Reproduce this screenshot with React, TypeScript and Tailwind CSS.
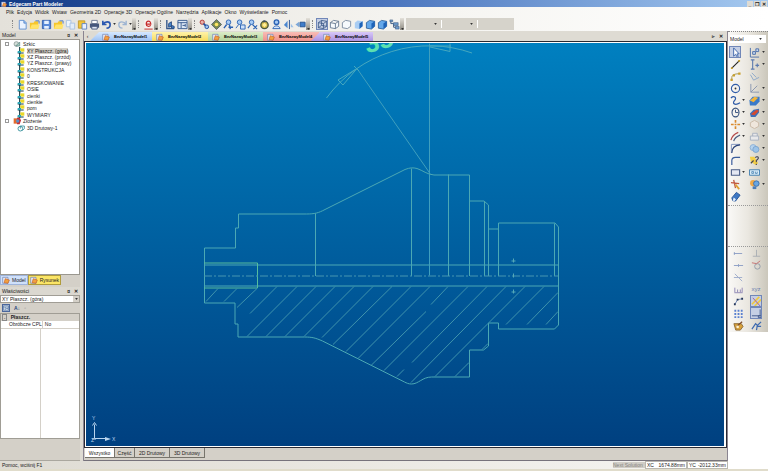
import React from 'react';
import clsx from 'clsx';

const icons: Record<string, React.ReactNode> = {
  file: <><path d="M2.5 1.5h5l2.500 2.500v7h-7.500z" fill="#eaf3ff" stroke="#5f8fd0" /><path d="M7.500 1.500v3h2.500" fill="#8fb8ee" stroke="#5f8fd0" /></>,
  open: <><path d="M1 4h4l1-1.500h4v8H1z" fill="#f6c62c" /><path d="M1 10.500 3 6h8.500l-1.500 4.500z" fill="#ffe36a" /><path d="M7 2h4v3" stroke="#4a78c8" /></>,
  save: <><path d="M1.500 1.500h9v9h-9z" fill="#5b8ad8" stroke="#335fae" /><path d="M3.500 2h5v3.500h-5zM3.500 7.500h5v3h-5z" fill="#e6f0ff" /></>,
  copy: <><path d="M1.500 1.500h5v7h-5z" fill="#eef4fb" stroke="#a9c2e2" /><path d="M5.500 4.500h5v6.500h-5z" fill="#e2ecf8" stroke="#a9c2e2" /></>,
  paste: <><path d="M1.500 2h7v8h-7z" fill="#f2c438" stroke="#c39a2a" /><path d="M5.500 5h5v6h-5z" fill="#e9f1ff" stroke="#5f84c0" /></>,
  print: <><path d="M3 1.500h6V5H3z" fill="#fff" stroke="#6c7890" /><path d="M1 5h10v4.500H1z" fill="#47587c" /><path d="M3 8h6v3H3z" fill="#dfe6f2" stroke="#47587c" /></>,
  undo: <path d="M2 2v4h4M2.500 5.500C4 2.500 10 2 10 6c0 2.500-1.500 4-4 4" stroke="#2c58b0" strokeWidth="1.800" />,
  redo: <path d="M10 2v4H6M9.500 5.500C8 2.500 2 2 2 6c0 2.500 1.500 4 4 4" stroke="#9db4d2" strokeWidth="1.500" />,
  edge: <><path d="M1.500 1h9v9.500h-9z" fill="#f7f0ee" /><path d="M3.500 5.500h5C8.500 1 3.500 1.500 3.500 5.500c0 3 3.500 3 5 1.500" stroke="#c62a2a" strokeWidth="1.300" /><path d="M1.500 11h9" stroke="#c62a2a" /></>,
  layers: <><path d="M2 1v9.500h8" stroke="#35588c" strokeWidth="1.500" /><path d="M4 5l3-2v5l-3 1zM7 7l3 1v2H7z" fill="#4a88d0" stroke="#27497e" /></>,
  panel: <><path d="M1 1.500h10v9H1z" fill="#dce8f5" stroke="#35588c" /><path d="M1 4h10M4.500 4v6M6 7h3M9 5.500v3" stroke="#35588c" /></>,
  zoomAll: <><circle cx="3.500" cy="3.500" r="2.300" fill="#e9b0a8" stroke="#b03434" /><path d="m5 5 3 3" stroke="#234d9c" strokeWidth="2" /><circle cx="8.500" cy="8.500" r="2" fill="#9ec4f5" stroke="#234d9c" /></>,
  pan: <><path d="m6 .5 5.500 5.500L6 11.500.5 6z" fill="#7c8b4e" stroke="#536070" /><circle cx="6" cy="6" r="2" fill="#ffe765" /></>,
  zoomIn: <><circle cx="6" cy="3.500" r="2.500" fill="#a8ccf5" stroke="#2b62b4" /><path d="m4 6-3 4M7 6l1 5M6 9h5" stroke="#2b62b4" strokeWidth="1.500" /></>,
  zoomBox: <><circle cx="5" cy="3.500" r="2.500" fill="#a8ccf5" stroke="#2b62b4" /><path d="m4 6-3 4M6 6.500h5V11H6z" fill="#cfe2fa" stroke="#2b62b4" /></>,
  zoomOut: <><circle cx="5" cy="3.500" r="2.500" fill="#a8ccf5" stroke="#2b62b4" /><path d="m4 6-3 4M6 6l5 5M11 7l-4 4" stroke="#2b62b4" strokeWidth="1.300" /></>,
  rotate: <><circle cx="6" cy="6.500" r="4" fill="#d8bc4a" stroke="#4a5a40" strokeWidth="1.500" /><path d="M3.500 6.500 6 4l2.500 2.500L6 9z" fill="#fff09a" /><path d="m5 1 3 1.500L5 4" fill="#3d4c66" /></>,
  view: <><circle cx="6" cy="3.500" r="2.500" fill="#a8ccf5" stroke="#2b62b4" strokeWidth="1.500" /><path d="M2 10.500c1-4 7-4 8 0z" fill="#d5e5f9" stroke="#2b62b4" /></>,
  mirror: <><path d="M5 2v8L1 6.500z" fill="#4c87cf" /><path d="M7 1v10" stroke="#234d8c" /><path d="m8.500 5 3 4h-3z" fill="#9dc0e6" /></>,
  hide: <><path d="M4.500 3v6L.5 6z" fill="#7ea8d8" /><path d="M5.500 3.500h5.500v5H5.500z" fill="#3f7dca" stroke="#27548f" /></>,
  wire: <path d="M1.500 4 5 1.500l5.500 1V8L7 10.500l-5.500-1zM1.500 4l5.500 1 3.500-2.500M7 5v5.500M5 1.500V7l5.500 1M1.500 9.500 5 7" stroke="#2d4d7e" strokeWidth=".8" />,
  cube: <path d="M1.500 4 5 1.500l5.500 1V8L7 10.500l-5.500-1zM1.500 4l5.500 1 3.500-2.500M7 5v5.500" stroke="#5a6e88" strokeWidth=".9" fill="#f6fafd" />,
  hidden: <path d="M1.500 4 5 1.500l5.500 1V8L7 10.500l-5.500-1z" stroke="#6d7f96" strokeWidth=".9" fill="#f6fafd" />,
  shade: <><path d="M2 4 5 1.500l5.500 1V8L7 11l-5-1z" fill="#a9cdf3" /><path d="M7 5l3.500-2.500V8L7 11z" fill="#1e63b8" /></>,
  solid: <><path d="M1.500 4 5 1.500l5.500 1V8L7 11l-5.500-1z" fill="#63a7ea" stroke="#19508f" strokeWidth=".8" /><path d="M7 5l3.500-2.500V8L7 11z" fill="#1e63b8" /></>,
  tree: <><path d="M2 2v3h3M5 5v4h3" stroke="#36557f" /><path d="M1 1h3v2H1zM5 4h5v3H5zM7 8h4v3H7z" fill="#6f9ccb" stroke="#36557f" strokeWidth=".6" /></>,
  select: <path d="M4 1v9l2-2 2 3 1-.7L7.500 7.500H10z" fill="#fff" stroke="#3a62aa" />,
  line: <><path d="m2 10 8-8" stroke="#222" strokeWidth="1.200" /><path d="M1 9h2v2H1zM9 1h2v2H9z" fill="#c9a02c" /></>,
  polyline: <><path d="M2 10V7c0-3 4-4 8-4" stroke="#9a8c45" /><path d="M.5 8.500H3V11H.5zM3 3.500h2.500V6H3zM9 1.500h2.500V4H9z" fill="#c9a02c" /></>,
  circle: <><circle cx="6" cy="6" r="4.500" stroke="#2f5ba8" strokeWidth="1.200" /><circle cx="6" cy="6" r="1" fill="#333" /></>,
  spline: <path d="M1 3.500C4-.5 8 3 5 6s0 6 6 2.500" stroke="#2f5ba8" strokeWidth="1.300" />,
  ellipse: <><ellipse cx="6" cy="6" rx="3.800" ry="4.800" stroke="#37507c" strokeWidth="1.200" /><path d="M6 3v3h3" stroke="#37507c" /></>,
  point: <path d="M6 1v3M6 8v3M1 6h3M8 6h3M5 6h2" stroke="#d98a2c" strokeWidth="1.800" />,
  offset: <><path d="M1 10C2 6 5 3 9 1.500" stroke="#b44a4a" strokeWidth="1.300" /><path d="M4 11c1-3 3-5 7-6.500" stroke="#4b5d80" strokeWidth="1.300" /></>,
  fillet: <><path d="M1.500 11V1.500H11" stroke="#7d92bc" /><path d="M2 11c0-5 3-8.500 9-9" stroke="#2c4478" strokeWidth="1.200" /></>,
  corner: <path d="M2 11V6c0-2 1-3.500 4-3.500h5" stroke="#3b5d9c" strokeWidth="1.300" />,
  rect: <path d="M1.500 3h9v6h-9z" fill="#e4e7f2" stroke="#4a5c86" strokeWidth="1.200" />,
  trim: <><path d="m1 4 9 1M4 1l2 9" stroke="#c15a42" strokeWidth="1.400" /><path d="m6 6 4 5" stroke="#e0a030" strokeWidth="2" /></>,
  pencil: <><path d="m2 7.500 5-6 4 3-5 6.500-3-.500z" fill="#3f78c4" stroke="#245296" /><path d="m4 7 2.500 2L5 11l-2-.500z" fill="#e6f1ff" /></>,
  dims: <><path d="M1.500 1v10H11" stroke="#4c6da8" /><path d="M4 5h3v3H4zM7.500 2h3v3h-3z" stroke="#4c6da8" fill="#c8d8f0" /></>,
  height: <path d="M2 1h4M4 1v10M2 11h4M7 7h4M9 5v4" stroke="#5b7aae" strokeWidth="1.200" />,
  plane: <path d="M1.500 4 5 10l6-3M3 2l5 5" stroke="#8aa6c8" />,
  axes: <path d="M2 1v9h9M2 10l7-7" stroke="#8794ae" />,
  solidA: <><path d="M.5 6 4 2h7.500v5l-4 4.500H1z" fill="#3a7ac8" /><path d="m1 6 5-4 4 1-5 5z" fill="#f3b53a" /></>,
  solidB: <><path d="M1 7 5 3l6-1v4l-4 5H2z" fill="#3f6fb8" /><path d="m2 8 6-5 3 1-5 5z" fill="#d64b30" /></>,
  ghost: <path d="m6 1.500 4.500 2.500v4L6 10.500 1.500 8V4z" fill="#efe6dc" stroke="#c9b9a6" />,
  ghostBox: <path d="M1.500 5.500h9V10h-9zM4 5.500v-3h5v3" fill="#e8e8ea" stroke="#a6b0c0" />,
  boolean: <><circle cx="4.500" cy="5" r="3.300" fill="#b6d3ee" stroke="#8db0d5" /><circle cx="7.500" cy="7" r="3.300" fill="#9cc3e8" stroke="#7ba4cf" /></>,
  help: <><path d="M1 2h5l4 7-3 2-5-4z" fill="#f3cf48" /><path d="M7 3c1-2 4-1 3 1L8 6v2M8 9.500V11M2 9l3-3" stroke="#445" strokeWidth="1.200" /></>,
  label: <><path d="M.5 3h11v6H.5z" fill="#d9ecf8" stroke="#3e7cae" /><path d="M3 5v2h2V5zM7 5v2h2V5" stroke="#3e7cae" strokeWidth=".8" /></>,
  globe: <><circle cx="4.500" cy="4.500" r="3.300" fill="#f0a848" /><circle cx="8" cy="5" r="3" fill="#6aa6e2" stroke="#3c6ea8" /><path d="M4 8h4v3H4z" fill="#4c7db9" /></>,
  snapEnd: <path d="M1 6h9M1.500 4.500v3" stroke="#8b9cc4" />,
  snapMid: <path d="M1 6h10M6 4.500v3" stroke="#8b9cc4" />,
  snapCross: <path d="m2 2 8 8M1 6h9" stroke="#9cabca" />,
  ruler: <path d="M1.500 9.500h9M2 9V4M5 9V6M8 9V6M10 9V4" stroke="#8d84b4" />,
  perp: <path d="M6 2v7M2 9h8" stroke="#a9aeb4" />,
  tangent: <><circle cx="7" cy="7" r="3" stroke="#909aa8" /><path d="m1 3 5 1 4-3" stroke="#c7706e" /></>,
  nodes: <><path d="m2 9 3-5 5-1" stroke="#6a83b4" /><path d="M1 8h2v2H1zM4 3h2v2H4zM9 2h2v2H9z" fill="#25365a" /></>,
  grid: <path d="M1.500 2h2v2h-2zM5 2h2v2H5zM8.500 2h2v2h-2zM1.500 5.500h2v2h-2zM5 5.500h2v2H5zM8.500 5.500h2v2h-2zM1.500 9h2v2h-2zM5 9h2v2H5zM8.500 9h2v2h-2z" fill="#5a80d0" />,
  palette: <><path d="M1 4h8l2 3-3 4H3z" fill="#d8a13a" stroke="#8c6a34" /><path d="m4 9 1-3 5-4" stroke="#7a4a2a" strokeWidth="1.300" /><circle cx="5" cy="7.500" r="1.500" fill="#fff3d0" /></>,
  lineHi: <><path d="m1 9 8-8M4 11l7-7" stroke="#f0c93e" strokeWidth="1.800" /><path d="m2 2 8 9" stroke="#a95a9a" /></>,
  ortho: <path d="M1 8.500h9V1.500M8 8.500h3v2H8z" stroke="#40588a" />,
  run: <path d="m1 10 4-6 2 2 4-4M7 5l-1 6M6 7h5" stroke="#3c69b0" strokeWidth="1.300" />,
  sketch: <><circle cx="5" cy="6" r="3.500" fill="#d4dfd9" stroke="#7c8b89" /><path d="M4 9 10 3v6z" fill="#a2cabe" stroke="#5b8480" /></>,
  ucs: <><path d="M4 0v11M1 9h9" stroke="#173f4c" strokeWidth="1.800" /><path d="M5 2h6v5H5z" fill="#e9d829" /><path d="M1 6h5v3H1z" fill="#2aa6b8" /></>,
  assembly: <><path d="M1 2h6v8H1z" fill="#e26a2c" /><path d="M6 1h4l2 4-2 6H6z" fill="#c53038" /><circle cx="7" cy="6" r="2.500" fill="#5b90c8" /></>,
  coil: <><circle cx="5" cy="7" r="3.500" stroke="#2d8c98" strokeWidth="1.300" /><path d="M5 7V3h6v4l-3 3" stroke="#2d8c98" strokeWidth="1.200" /></>,
  doc: <><path d="M1 2h8v9H1z" fill="#e5e9f5" stroke="#6b80b0" /><path d="M3 10 5 4l6 2-2 5z" fill="#f0a040" stroke="#c86028" /></>,
};

function Icon({ name, className = 'size-[11px]' }: { name: string; className?: string }) {
  return (
    <svg viewBox="0 0 12 12" fill="none" className={clsx('shrink-0', className)} aria-hidden="true">
      {icons[name]}
    </svg>
  );
}

const menu = ['Plik', 'Edycja', 'Widok', 'Wstaw', 'Geometria 2D', 'Operacje 3D', 'Operacje Ogólne', 'Narzędzia', 'Aplikacje', 'Okno', 'Wyświetlanie', 'Pomoc'];

const toolbars = [
  ['file', 'open', 'save', 'open', 'copy', 'paste', 'print', 'undo+', 'redo+'],
  ['edge'],
  ['layers', 'panel'],
  ['zoomAll', 'pan', 'zoomIn', 'zoomBox', 'zoomOut', 'rotate', 'view', 'mirror', 'hide'],
  ['wire*', 'cube', 'hidden', 'shade', 'solid', 'solid', 'tree'],
];

const documents = [
  { name: 'BezNazwyModel1', tab: 'w-[62px] pl-3 bg-linear-to-b from-[#d6e8ff] to-[#9dc2f4] [clip-path:polygon(9px_0,100%_0,100%_100%,0_100%)]' },
  { name: 'BezNazwyModel2', tab: 'w-[56px] pl-1 bg-linear-to-b from-[#fff3a8] to-[#f8dc58]' },
  { name: 'BezNazwyModel3', tab: 'w-[55px] pl-1 bg-linear-to-b from-[#dcecc8] to-[#b4d49a]' },
  { name: 'BezNazwyModel4', tab: 'w-[56px] pl-1 bg-linear-to-b from-[#f8bdb6] to-[#ee918b]' },
  { name: 'BezNazwyModel5', tab: 'w-[62px] -ml-2 pl-3 bg-linear-to-b from-[#d8c8f8] to-[#ac94e2] [clip-path:polygon(9px_0,100%_0,100%_100%,0_100%)]' },
];

const tree = [
  { label: 'Szkic', icon: 'sketch', level: 0 },
  { label: 'XY Płaszcz. (góra)', icon: 'ucs', level: 1, selected: true },
  { label: 'XZ Płaszcz. (przód)', icon: 'ucs', level: 1 },
  { label: 'YZ Płaszcz. (prawy)', icon: 'ucs', level: 1 },
  { label: 'KONSTRUKCJA', icon: 'ucs', level: 1 },
  { label: '0', icon: 'ucs', level: 1 },
  { label: 'KRESKOWANIE', icon: 'ucs', level: 1 },
  { label: 'OSIE', icon: 'ucs', level: 1 },
  { label: 'cienki', icon: 'ucs', level: 1 },
  { label: 'cienkie', icon: 'ucs', level: 1 },
  { label: 'pom', icon: 'ucs', level: 1 },
  { label: 'WYMIARY', icon: 'ucs', level: 1 },
  { label: 'Złożenie', icon: 'assembly', level: 0 },
  { label: '3D Drutowy-1', icon: 'coil', level: 1 },
];

// "+" adds a drop-down arrow, "*" marks the active tool
const palette = [
  ['select*', 'dims+'], ['line', 'height+'], ['polyline', 'plane'], ['circle', 'axes+'],
  ['spline+', 'solidA+'], ['ellipse+', 'solidB+'], ['point+', 'ghost+'], ['offset+', 'ghostBox+'],
  ['fillet', 'boolean+'], ['corner', 'help+'], ['rect+', 'label'], ['trim', 'globe+'], ['pencil', ''],
];

const snaps = [
  ['snapEnd', 'perp'], ['snapMid', 'tangent'], ['snapCross', ''], ['ruler', 'xyz'],
  ['nodes', 'lineHi*'], ['grid', 'ortho*'], ['palette', 'run'],
];

function PanelHeader({ title }: { title: string }) {
  return (
    <div className="flex h-2 shrink-0 items-center justify-between bg-[#dbd8d0] px-0.5">
      <h2>{title}</h2>
      <div className="flex gap-1 font-bold">
        <button aria-label="Przypnij">¤</button>
        <button aria-label="Zamknij">✕</button>
      </div>
    </div>
  );
}

function Tool({ spec }: { spec: string }) {
  const name = spec.replace(/[+*]/, '');
  if (!name) return <span />;
  return (
    <div className="flex items-center">
      <button
        aria-label={name}
        className={clsx('flex size-3 items-center justify-center', spec.endsWith('*') && 'bg-[#c5cfe4] outline outline-[#7187b8] -outline-offset-1')}
      >
        {name === 'xyz' ? <span className="text-[6px] text-[#6a7fb0]">xyz</span> : <Icon name={name} />}
      </button>
      {spec.endsWith('+') && <Caret />}
    </div>
  );
}

function Caret() {
  return <svg viewBox="0 0 4 3" className="ml-px h-[2px] w-[3px] shrink-0"><path d="M0 0h4L2 3z" fill="#333" /></svg>;
}

function Toolbar() {
  return (
    <div className="flex h-[14px] shrink-0 items-center bg-linear-to-r from-[#e4e1da] via-[#f4f3ef] to-white pl-3">
      {toolbars.map((group, i) => (
        <div key={i} className="flex h-[13px] items-center">
          <span className="mr-px h-2 border-l border-dotted border-[#888]" />
          <div className="flex pl-0.5">
            {group.map((spec, j) => <Tool key={j} spec={spec} />)}
          </div>
          <span className="mr-0.5 flex h-3 w-1 items-end bg-linear-to-b from-[#e4e1da] to-[#8f8c84]"><Caret /></span>
        </div>
      ))}
      <div className="flex h-3 items-center bg-[#d6d3cb]">
        {['Warstwa', 'Kolor'].map(label => (
          <div key={label} className="flex h-2 w-9 items-center justify-end border-r border-white pr-1">
            <select aria-label={label} disabled className="w-full appearance-none" />
            <Caret />
          </div>
        ))}
        <span className="w-9" />
      </div>
    </div>
  );
}

function Sidebar() {
  return (
    <aside className="flex w-20 shrink-0 flex-col bg-[#d4d0c8]">
      <PanelHeader title="Model" />
      <div className="min-h-0 flex-1 border border-[#9a978f] bg-white pt-px">
        <ul className="flex h-[90px] flex-col">
          {tree.map(item => (
            <li key={item.label} className={clsx('flex min-h-0 flex-1 items-center', item.level ? 'pl-4' : 'pl-1')}>
              {!item.level && <span className="mr-1 size-1 border border-[#999]" />}
              <Icon name={item.icon} className="size-2" />
              <span className={clsx('ml-0.5 whitespace-nowrap leading-[6px]', item.selected && 'bg-[#d4d0c8]')}>{item.label}</span>
            </li>
          ))}
        </ul>
      </div>
      <div className="flex h-3 shrink-0 items-start">
        <button className="flex h-[10px] items-center gap-0.5 border border-[#9fb4da] bg-[#cfe0fa] px-px"><Icon name="doc" className="size-2" />Model</button>
        <button className="flex h-[10px] items-center gap-0.5 border border-[#b09c3c] bg-[#fbe566] px-px"><Icon name="doc" className="size-2" />Rysunek</button>
      </div>
      <PanelHeader title="Właściwości" />
      <div className="flex h-2 shrink-0 items-center border border-[#a09d95] bg-white">
        <select aria-label="Obiekt" className="h-full flex-1 appearance-none px-px leading-[6px]">
          <option>XY Płaszcz. (góra)</option>
        </select>
        <span className="flex h-full w-[6px] items-center justify-center bg-[#d4d0c8]"><Caret /></span>
      </div>
      <div className="flex h-[10px] shrink-0 items-center gap-1 pl-0.5">
        <button aria-label="Kategorie" className="flex size-2 items-center justify-center bg-[#c5cfe4] outline outline-[#4a669c] -outline-offset-1"><Icon name="panel" className="size-[6px]" /></button>
        <button aria-label="Alfabetycznie" className="flex font-bold text-[#26477c]">A↓</button>
        <span className="text-[#999]">▫</span>
      </div>
      <div className="flex h-[126px] shrink-0 flex-col border border-[#a09d95] bg-white">
        <table className="w-full border-collapse text-left">
          <tbody>
            <tr className="h-[7px] bg-[#d4d0c8]">
              <th colSpan={2} className="p-0 leading-[6px]"><span className="mr-0.5 ml-px border border-[#888] px-px text-[4px]">-</span> Płaszcz.</th>
            </tr>
            <tr className="h-[7px] border-b border-[#d4d0c8]">
              <td className="w-10 border-r border-[#d4d0c8] p-0 pl-2 leading-[6px] whitespace-nowrap">Obróbcze CPL</td>
              <td className="p-0 pl-0.5 leading-[6px]">No</td>
            </tr>
          </tbody>
        </table>
        <div className="w-10 flex-1 border-r border-[#d4d0c8]" />
      </div>
      <div className="h-[22px] shrink-0 border-b border-[#aaa79f]" />
    </aside>
  );
}

const hatch = [
  'M218 288l-12 13', 'M237 288l-13 13', 'M257 288l-20 19', 'M277 286l-27 27', 'M297 286l-50 50', 'M316 286l-50 50',
  'M335 286l-50 50', 'M354 286l-50 50', 'M373 286l-51 51', 'M392 286l-59 58', 'M411 286l-65 65', 'M430 286l-72 72',
  'M448 286l-17 18', 'M426 311l-55 54', 'M468 286l-84 84', 'M487 286l-75 76', 'M404 369l-7 7', 'M506 286l-95 96',
  'M525 286l-90 90', 'M544 286l-38 38', 'M558 292l-31 32', 'M558 311l-12 13', 'M469 362l-14 14', 'M488 343l-6 6',
];

function Drawing() {
  return (
    <svg viewBox="86 43 638 402" className="h-full w-full" fill="none" role="img" aria-label="Rysunek wałka">
      <g stroke="#4ba8b4" strokeWidth="1">
        <path d="M204.500 302.500v-55h31v-20h3v-14h68c8 0 12-1 18.500-4.500L405 169c5-2 8-2 12-1 6 2 10 6 17 6.500h35.500v26H484l4.500 4v24h10v-6H555l3.500 4v98l-4 4h-56v-6h-10v23l-5 4h-14v27h-38c-9 0-13 7-20 7-3 0-5-1-7-2l-82-41c-7-3-10-4-18-4h-66.500v-13h-3v-21z" />
        <path d="M315.500 213v62.500M411.500 168v107.500M448.500 174v101.500M469.500 200v75.500M484.500 201v74.500M488.500 228v47.500M498.500 228v47.500M554.500 223v52.500" />
        <path d="M204 264.500h354M204 285.500h354" />
        <path d="M429.500 43v232M357 68l73 105" stroke="#3f9fbe" />
        <path d="M326.500 97.500A128 128 0 0 1 472 52.500M357 68l-19 11.500 5 5zM430 45.500h21M430 46.500l20 4.500V43M354 65.500l5 5" stroke="#46a8bf" />
      </g>
      <path d="M204 262.500h53.500v25H204" stroke="#56bd9e" />
      <path d="M204 275.500h354" stroke="#4796b0" strokeDasharray="8 2 2 2" />
      <path d="M513.500 258v4M511.500 260.500h4M513.500 273v4M513.500 289v4M511.500 291.500h4" stroke="#55a9b8" />
      <path d={hatch.join('')} stroke="#3f93ac" strokeWidth="1" />
      <text x="367" y="53" transform="rotate(-16 367 53)" fill="#5be0b0" className="text-[26px] font-bold">35°</text>
      <path d="M94.500 424v14h12M92.500 425l2-3 2 3M92 438.500h4" stroke="#b8d4ee" />
      <path d="M105 436.500l6 2-6 2z" fill="#b8d4ee" />
      <text x="92" y="419" fill="#b8d4ee" className="text-[5px]">Y</text>
      <text x="112" y="440" fill="#b8d4ee" className="text-[5px]">X</text>
      <text x="91" y="441" fill="#b8d4ee" className="text-[5px]">Z</text>
    </svg>
  );
}

function Workspace() {
  return (
    <main className="flex min-w-0 flex-1 flex-col border-x border-[#8a8490] bg-[#dedbd3]">
      <div className="flex h-[10px] shrink-0 items-end pl-px">
        <span className="w-[5px] self-center text-center leading-[6px]">‹</span>
        {documents.map(doc => (
          <button key={doc.name} className={clsx('flex h-[9px] shrink-0 items-center gap-1 text-[4px] font-bold text-black', doc.tab)}>
            <Icon name="doc" className="size-2" />
            {doc.name}
          </button>
        ))}
        <div className="ml-auto flex gap-1 self-center pr-1 font-bold">
          <button aria-label="Następny">▹</button>
          <button aria-label="Zamknij">✕</button>
        </div>
      </div>
      <div className="min-h-0 flex-1 border border-[#2a2a33] bg-white p-px pr-0.5">
        <div className="h-full bg-linear-to-b from-[#0080c0] to-[#004080]">
          <Drawing />
        </div>
      </div>
      <div className="flex h-[13px] shrink-0 items-start border-b border-[#77737c] bg-[#d4d0c8] pl-px">
        {['Wszystko', 'Część', '2D Drutowy', '3D Drutowy'].map((name, i) => (
          <button key={name} className={clsx('h-[10px] border-r border-b border-[#77746c]', i === 0 ? 'w-[30px] bg-white' : i === 1 ? 'w-5' : 'w-[35px]')}>{name}</button>
        ))}
      </div>
    </main>
  );
}

function ToolPalette() {
  return (
    <aside className="w-10 shrink-0 bg-white">
      <div className="bg-linear-to-r from-[#faf9f7] via-[#eae7e0] to-[#cbc7bb] pb-px">
        <div className="flex h-[15px] items-center border-t border-dotted border-[#888] px-0.5">
          <label className="flex h-2 w-full items-center bg-white pr-1">
            <select aria-label="Paleta" className="w-full appearance-none leading-[6px]"><option>Model</option></select>
            <Caret />
          </label>
        </div>
        <div className="grid grid-cols-2 pl-px">
          {palette.flat().map((spec, i) => <Tool key={i} spec={spec} />)}
        </div>
        <div className="mt-[3px] h-[42px] border-y border-dotted border-[#999]" />
        <div className="grid auto-rows-[12px] grid-cols-2 pl-1">
          {snaps.flat().map((spec, i) => <Tool key={i} spec={spec} />)}
        </div>
      </div>
    </aside>
  );
}

export default function App() {
  return (
    <div className="flex h-screen flex-col overflow-hidden bg-white font-[Liberation_Sans,Arial,sans-serif] text-[5px] leading-[6px] text-[#222]">
      <header className="shrink-0">
        <div className="flex h-[7px] items-center bg-linear-to-r from-[#123a86] via-[#4a74bd] to-[#a6caf0] pl-px">
          <Icon name="doc" className="size-[6px]" />
          <h1 className="ml-0.5 font-bold text-white">Edgecam Part Modeler</h1>
          <div className="ml-auto flex gap-px pr-px">
            {['_', '❐', '✕'].map(mark => (
              <button key={mark} className="h-[6px] w-[6px] bg-[#dedbd3] text-[5px] leading-[6px] font-bold">{mark}</button>
            ))}
          </div>
        </div>
        <nav className="flex h-[10px] items-center gap-[3px] bg-linear-to-r from-[#e4e1da] via-[#f4f3ef] to-white pl-[6px]">
          {menu.map(item => <button key={item} className="whitespace-nowrap">{item}</button>)}
        </nav>
      </header>
      <Toolbar />
      <div className="flex min-h-0 flex-1">
        <Sidebar />
        <div className="w-[3px] shrink-0 bg-[#dedbd3]" />
        <Workspace />
        <ToolPalette />
      </div>
      <footer className="flex h-[10px] shrink-0 items-center border-b-2 border-[#e0dccb] bg-linear-to-r from-[#dedbd3] to-[#f8f7f4]">
        <span className="flex-1 pl-0.5">Pomoc, wciśnij F1</span>
        <span className="w-8 bg-[#d0cdc6] text-[#88857e]">Next Solution</span>
        <span className="flex w-[42px] justify-between border border-[#bbb8b0] bg-white px-px"><span>XC</span><span>1674.88mm</span></span>
        <span className="flex w-[41px] justify-between border border-[#bbb8b0] bg-white px-px"><span>YC</span><span>-2012.33mm</span></span>
        <span className="h-full w-10 bg-white" />
      </footer>
    </div>
  );
}
